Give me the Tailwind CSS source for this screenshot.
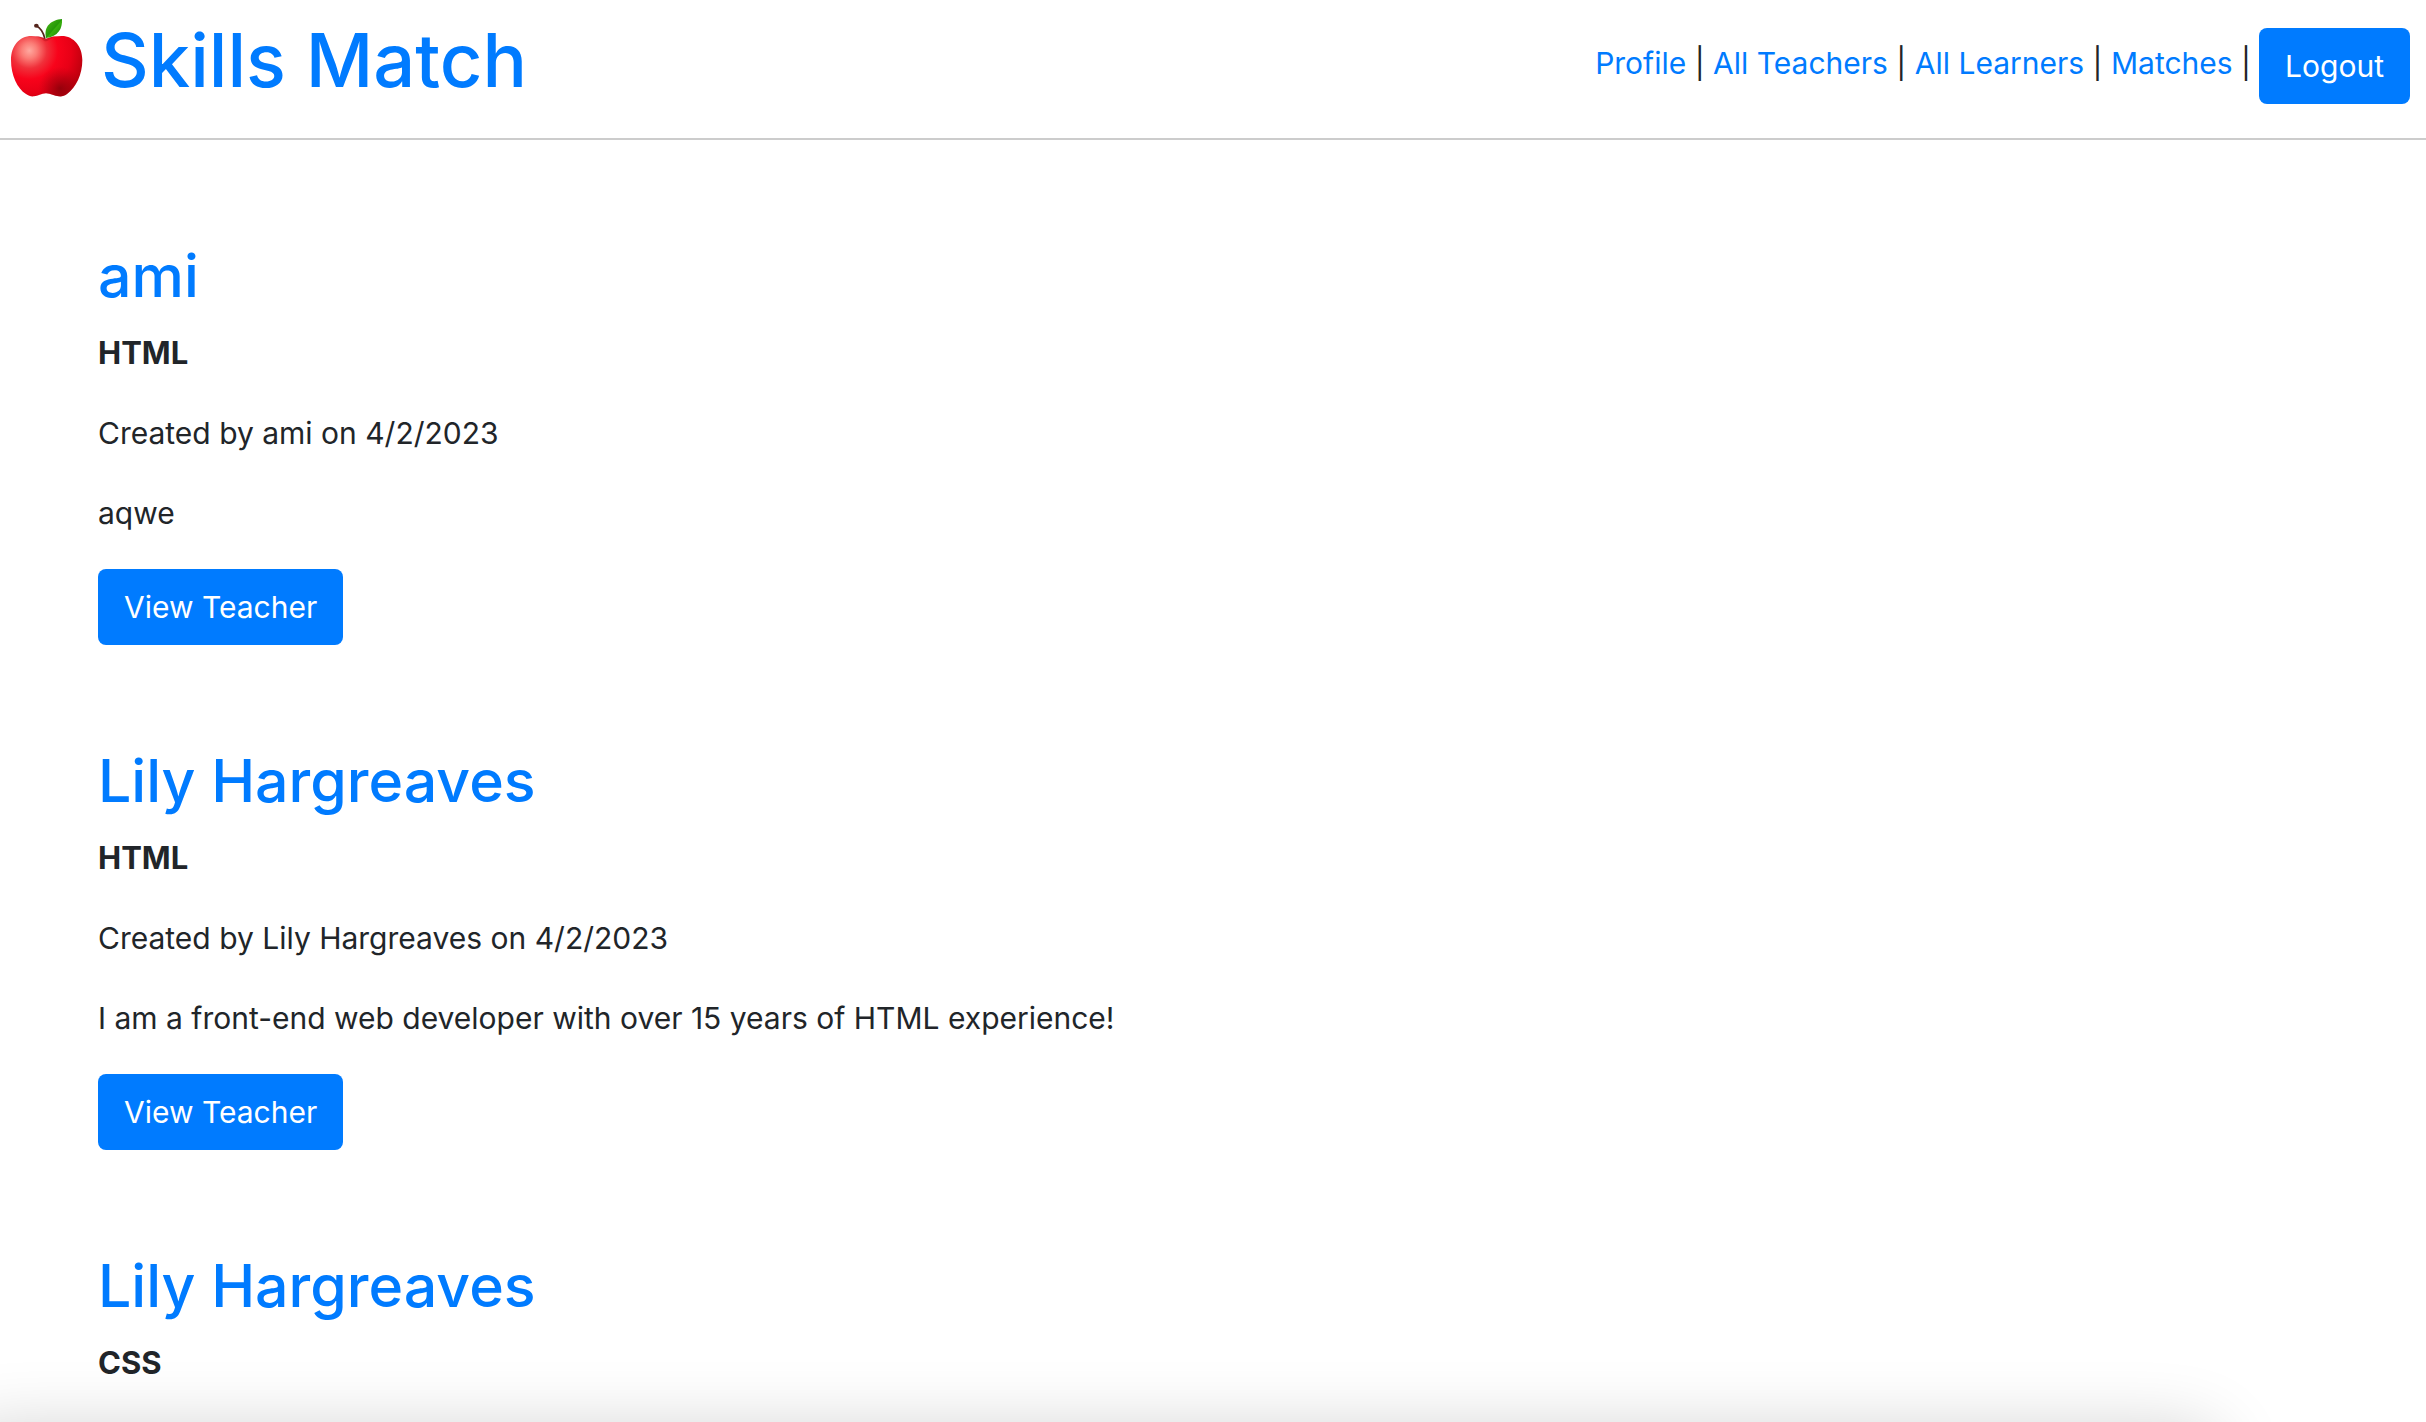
<!DOCTYPE html>
<html lang="en">
<head>
  <meta charset="utf-8">
  <meta name="viewport" content="width=device-width, initial-scale=1">
  <title>Skills Match</title>
  <script src="https://cdn.jsdelivr.net/npm/@tailwindcss/browser@4"></script>
</head>
<body class="bg-white font-['Inter','Liberation_Sans',sans-serif] text-[30px] leading-[48px] text-[#212529]">
  <header class="flex items-start justify-between border-b-2 border-[#cccccc] pt-3 pr-4 pb-[30px] pl-2">
    <h1 class="text-[74px] leading-[96px] font-medium">
      <a href="#" class="flex items-center gap-4 text-[#007bff]">
        <svg class="h-[84px] w-[77px]" viewBox="24 24 231 252" aria-hidden="true">
          <defs>
            <radialGradient id="skin" gradientUnits="userSpaceOnUse" cx="88" cy="122" r="165">
              <stop offset="0" stop-color="#ffa9a0"/>
              <stop offset=".14" stop-color="#fb7d77"/>
              <stop offset=".32" stop-color="#f0303a"/>
              <stop offset=".52" stop-color="#f8031b"/>
              <stop offset=".76" stop-color="#e80016"/>
              <stop offset="1" stop-color="#c0000e"/>
            </radialGradient>
            <radialGradient id="shade" gradientUnits="userSpaceOnUse" cx="180" cy="235" r="65">
              <stop offset="0" stop-color="#6d0006" stop-opacity=".6"/>
              <stop offset=".5" stop-color="#85000a" stop-opacity=".35"/>
              <stop offset="1" stop-color="#a0000c" stop-opacity="0"/>
            </radialGradient>
            <linearGradient id="leaf" x1="0" y1="0" x2="1" y2="1">
              <stop offset=".2" stop-color="#3fae12"/>
              <stop offset=".5" stop-color="#259808"/>
              <stop offset=".55" stop-color="#38b00e"/>
              <stop offset="1" stop-color="#137a04"/>
            </linearGradient>
          </defs>
          <path fill="url(#skin)" d="M138 86C124 80 110 78 94 78C58 78 33 108 33 150C33 196 52 236 78 252C86 257 92 260 102 259C114 258 124 250 138 250C152 250 164 258 176 259C186 260 194 257 202 251C228 232 247 194 247 150C247 110 222 78 185 78C168 78 152 80 138 86Z"/>
          <path fill="url(#shade)" d="M138 86C124 80 110 78 94 78C58 78 33 108 33 150C33 196 52 236 78 252C86 257 92 260 102 259C114 258 124 250 138 250C152 250 164 258 176 259C186 260 194 257 202 251C228 232 247 194 247 150C247 110 222 78 185 78C168 78 152 80 138 86Z"/>
          <path fill="#9b0010" fill-opacity=".3" d="M108 80C124 80 130 94 138 94C146 94 154 81 170 79C158 80 148 82 138 86C128 82 118 79 108 80Z"/>
          <path fill="none" stroke="#54251c" stroke-width="5" stroke-linecap="round" d="M109 47C120 53 130 67 134 84"/>
          <ellipse cx="109" cy="47" rx="7" ry="6" fill="#54251c"/>
          <path fill="url(#leaf)" d="M138 84C130 48 154 30 186 27C188 56 174 80 138 84Z"/>
        </svg>
        <span>Skills Match</span>
      </a>
    </h1>
    <nav class="flex items-center gap-2 pt-4">
      <div class="pb-[6px]">
        <a href="#" class="text-[#007bff]">Profile</a> |
        <a href="#" class="text-[#007bff]">All Teachers</a> |
        <a href="#" class="text-[#007bff]">All Learners</a> |
        <a href="#" class="text-[#007bff]">Matches</a> |
      </div>
      <button type="button" class="rounded-lg bg-[#007bff] px-[26px] py-[14px] text-white">Logout</button>
    </nav>
  </header>

  <main class="flex flex-col gap-24 px-[98px] pt-24">
    <article>
      <h2 class="mb-[13px] text-[59px] leading-[80px] font-medium"><a href="#" class="text-[#007bff]">ami</a></h2>
      <div class="flex flex-col items-start gap-8">
        <p class="text-[31px] font-bold">HTML</p>
        <p>Created by ami on 4/2/2023</p>
        <p>aqwe</p>
        <button type="button" class="rounded-lg bg-[#007bff] px-[26px] py-[14px] text-white">View Teacher</button>
      </div>
    </article>
    <article>
      <h2 class="mb-[13px] text-[59px] leading-[80px] font-medium"><a href="#" class="text-[#007bff]">Lily Hargreaves</a></h2>
      <div class="flex flex-col items-start gap-8">
        <p class="text-[31px] font-bold">HTML</p>
        <p>Created by Lily Hargreaves on 4/2/2023</p>
        <p>I am a front-end web developer with over 15 years of HTML experience!</p>
        <button type="button" class="rounded-lg bg-[#007bff] px-[26px] py-[14px] text-white">View Teacher</button>
      </div>
    </article>
    <article>
      <h2 class="mb-[13px] text-[59px] leading-[80px] font-medium"><a href="#" class="text-[#007bff]">Lily Hargreaves</a></h2>
      <p class="text-[31px] font-bold">CSS</p>
    </article>
  </main>

  <!-- soft shadow rising from the bottom edge of the window -->
  <div class="pointer-events-none fixed -bottom-[210px] -left-10 right-[210px] h-[200px] rounded-3xl shadow-[0_0_72px_0_rgba(0,0,0,0.2)]" aria-hidden="true"></div>
</body>
</html>
